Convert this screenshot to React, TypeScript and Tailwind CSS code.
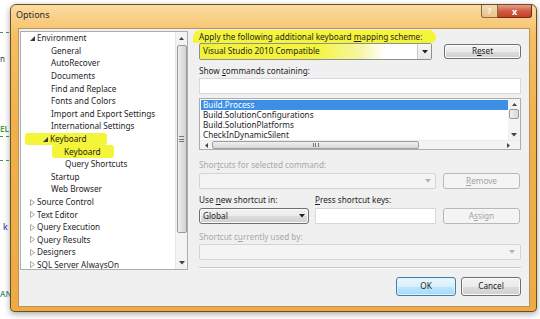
import type { ReactNode } from "react";

const treeRows: { label: string; level: number; arrow?: "open" | "closed"; mark?: "wide" | "narrow" }[] = [
  { label: "Environment", level: 0, arrow: "open" },
  { label: "General", level: 1 },
  { label: "AutoRecover", level: 1 },
  { label: "Documents", level: 1 },
  { label: "Find and Replace", level: 1 },
  { label: "Fonts and Colors", level: 1 },
  { label: "Import and Export Settings", level: 1 },
  { label: "International Settings", level: 1 },
  { label: "Keyboard", level: 1, arrow: "open", mark: "wide" },
  { label: "Keyboard", level: 2, mark: "narrow" },
  { label: "Query Shortcuts", level: 2 },
  { label: "Startup", level: 1 },
  { label: "Web Browser", level: 1 },
  { label: "Source Control", level: 0, arrow: "closed" },
  { label: "Text Editor", level: 0, arrow: "closed" },
  { label: "Query Execution", level: 0, arrow: "closed" },
  { label: "Query Results", level: 0, arrow: "closed" },
  { label: "Designers", level: 0, arrow: "closed" },
  { label: "SQL Server AlwaysOn", level: 0, arrow: "closed" },
];

const commands = [
  "Build.Process",
  "Build.SolutionConfigurations",
  "Build.SolutionPlatforms",
  "CheckInDynamicSilent",
];

function Arrow({ kind }: { kind?: "open" | "closed" }) {
  if (!kind) return <span className="w-[7px] shrink-0" />;
  return (
    <span className="flex w-[7px] shrink-0 items-center">
      {kind === "open" ? (
        <svg width="5" height="5" viewBox="0 0 5 5">
          <path d="M5 0 L5 5 L0 5 Z" fill="#3b3b3b" />
        </svg>
      ) : (
        <svg width="5" height="7" viewBox="0 0 5 7">
          <path d="M0.5 0.5 L4.5 3.5 L0.5 6.5 Z" fill="none" stroke="#a6a6a6" strokeWidth="1" />
        </svg>
      )}
    </span>
  );
}

function DownArrow({ color = "#222" }: { color?: string }) {
  return (
    <svg width="6" height="4" viewBox="0 0 6 4">
      <path d="M0 0 L6 0 L3 3.5 Z" fill={color} />
    </svg>
  );
}

function WinButton({
  children,
  disabled,
  focused,
  className = "",
}: {
  children: ReactNode;
  disabled?: boolean;
  focused?: boolean;
  className?: string;
}) {
  const look = disabled
    ? "border-[#b5b9bc] bg-[#f4f4f4] text-[#a3a3a3]"
    : focused
      ? "border-[#3c7fb1] bg-[linear-gradient(#eaf6fd,#d9f0fc_50%,#bee6fd_51%,#a7d9f5)] text-[#1b1b1b] shadow-[inset_0_0_0_1px_#dff2fc]"
      : "border-[#707070] bg-[linear-gradient(#f2f2f2,#ebebeb_50%,#dddddd_51%,#cfcfcf)] text-[#1b1b1b] shadow-[inset_0_0_0_1px_#fbfbfb]";
  return (
    <div className={`flex items-center justify-center rounded-[3px] border ${look} ${className}`}>
      {children}
    </div>
  );
}

function Label({ children, disabled }: { children: ReactNode; disabled?: boolean }) {
  return (
    <div className={`flex h-[12px] items-center leading-none ${disabled ? "text-[#a8a8a8]" : "text-[#1e1e1e]"}`}>
      {children}
    </div>
  );
}

export default function App() {
  return (
    <div className="flex h-[319px] w-[540px] overflow-hidden bg-white font-['Noto_Sans',sans-serif] text-[8.2px]">
      {/* bits of the page behind the dialog */}
      <div className="flex w-[10px] shrink-0 flex-col text-[8px] leading-none">
        <div className="mt-[32px] h-[1px] w-[9px] border-t border-dashed border-[#3e9a3e]" />
        <div className="mt-[22px] text-[#333]">n</div>
        <div className="mt-[62px] font-semibold text-[#3e9a3e]">EL</div>
        <div className="mt-[3px] h-[1px] w-[9px] border-t border-dashed border-[#3e9a3e]" />
        <div className="mt-[23px] h-[1px] w-[9px] border-t border-dashed border-[#3e9a3e]" />
        <div className="mt-[62px] ml-[3px] font-semibold text-[#5a4fb0]">k</div>
        <div className="mt-[59px] font-semibold text-[#3f8f86]">AN</div>
      </div>

      {/* dialog window */}
      <div className="mt-[4px] flex h-[308px] w-[527px] shrink-0 flex-col rounded-t-[6px] rounded-b-[4px] border border-[#6b4e1e] bg-[linear-gradient(#fbdca2,#f6bf62_10%,#f2b04a_40%,#eeab44)] shadow-[0_2px_6px_rgba(0,0,0,0.35)]">
        {/* title bar */}
        <div className="flex h-[23px] shrink-0 items-start">
          <div className="mt-[5px] ml-[5px] text-[9px] leading-none text-[#2a2a2a]">Options</div>
          <div className="ml-auto mr-[4px] flex">
            <div className="flex h-[13px] w-[17px] items-center justify-center rounded-bl-[3px] border border-t-0 border-[#8a6a3a] bg-[linear-gradient(#f5dcb4,#e9c18a)] text-[8px] font-bold leading-none text-[#fdf7ec]">
              ?
            </div>
            <div className="flex h-[13px] w-[34px] items-center justify-center rounded-br-[3px] border border-l-0 border-t-0 border-[#7a2a1a] bg-[linear-gradient(#e9a08c,#cf5a43_50%,#c4412a)] text-[9px] font-bold leading-none text-white">
              x
            </div>
          </div>
        </div>

        {/* client area */}
        <div className="mx-[7px] flex h-[279px] w-[512px] border border-[#b8935a] bg-[#f0f0f0]">
          {/* tree */}
          <div className="ml-[1px] mt-[2px] flex h-[239px] w-[168px] shrink-0 border border-[#abadb3] bg-white">
            <div className="flex min-w-0 flex-1 flex-col overflow-hidden">
              {treeRows.map((row, i) => (
                <div key={i} className="flex h-[12.6px] shrink-0 items-center">
                  <div
                    className={`flex h-full items-center ${
                      row.mark === "wide"
                        ? "ml-[4px] rounded-[3px] bg-[#f4f43a] pl-[18px] pr-[20px]"
                        : row.mark === "narrow"
                          ? "ml-[31px] rounded-[3px] bg-[#f4f43a] pl-[5px] pr-[13px]"
                          : ""
                    }`}
                    style={row.mark ? undefined : { paddingLeft: 9 + row.level * 14 }}
                  >
                    <Arrow kind={row.arrow} />
                    <span className="whitespace-nowrap leading-none text-[#1e1e1e]">{row.label}</span>
                  </div>
                </div>
              ))}
            </div>
            {/* vertical scrollbar */}
            <div className="flex w-[12px] shrink-0 flex-col items-center border-l border-[#e6e6e6] bg-[#f3f3f3]">
              <div className="flex h-[13px] items-center justify-center">
                <svg width="5" height="3" viewBox="0 0 5 3">
                  <path d="M0 3 L5 3 L2.5 0 Z" fill="#444" />
                </svg>
              </div>
              <div className="flex h-[188px] w-[10px] items-center justify-center rounded-[2px] border border-[#9a9a9a] bg-[linear-gradient(90deg,#f0f0f0,#e0e0e0_50%,#d2d2d2)]">
                <div className="flex h-[6px] w-[5px] flex-col justify-between">
                  <div className="h-[1px] bg-[#777]" />
                  <div className="h-[1px] bg-[#777]" />
                  <div className="h-[1px] bg-[#777]" />
                </div>
              </div>
              <div className="mt-auto flex h-[12px] items-center justify-center">
                <DownArrow color="#444" />
              </div>
            </div>
          </div>

          {/* right side */}
          <div className="ml-[11px] flex w-[322px] shrink-0 flex-col">
            <div className="mt-[1px] -ml-[6px] w-[243px] rounded-t-[14px] rounded-br-[10px] bg-[#f4f43a] pl-[6px] pt-[1px]">
              <Label>
                <span>
                  Apply the following additional keyboard <u>m</u>apping scheme:
                </span>
              </Label>
            </div>
            <div className="flex h-[17px] items-stretch gap-[12px]">
              <div className="flex w-[233px] items-stretch rounded-[2px] border border-[#8e8f8f] bg-[linear-gradient(90deg,#f2f23c,#f4f43e_50%,#f6f6a8_70%,#ffffff_80%)]">
                <div className="flex flex-1 items-center pl-[3px] leading-none text-[#1e1e1e]">
                  Visual Studio 2010 Compatible
                </div>
                <div className="flex w-[14px] items-center justify-center border-l border-[#c9c9c9] bg-[linear-gradient(#f7f7f7,#e8e8e8)]">
                  <DownArrow />
                </div>
              </div>
              <WinButton className="my-[1px] w-[77px]">
                <span>
                  R<u>e</u>set
                </span>
              </WinButton>
            </div>

            <div className="mt-[5px]">
              <Label>
                <span>
                  Show <u>c</u>ommands containing:
                </span>
              </Label>
            </div>
            <div className="mt-[1px] h-[16px] border border-[#d5d8de] bg-white" />

            {/* command list */}
            <div className="mt-[4px] flex h-[52px] flex-col border border-[#abadb3] bg-white">
              <div className="flex h-[41px] min-h-0">
                <div className="flex flex-1 flex-col pl-[1px] pt-[1px]">
                  {commands.map((c, i) => (
                    <div
                      key={c}
                      className={`flex h-[10.3px] items-center pl-[2px] leading-none ${
                        i === 0 ? "bg-[#3d8ee6] text-white" : "text-[#1e1e1e]"
                      }`}
                    >
                      {c}
                    </div>
                  ))}
                </div>
                <div className="flex w-[12px] flex-col items-center bg-[#f3f3f3]">
                  <div className="flex h-[10px] items-center justify-center">
                    <svg width="5" height="3" viewBox="0 0 5 3">
                      <path d="M0 3 L5 3 L2.5 0 Z" fill="#444" />
                    </svg>
                  </div>
                  <div className="h-[10px] w-[10px] rounded-[2px] border border-[#9a9a9a] bg-[linear-gradient(90deg,#f0f0f0,#d8d8d8)]" />
                  <div className="mt-auto flex h-[10px] items-center justify-center">
                    <DownArrow color="#444" />
                  </div>
                </div>
              </div>
              <div className="flex h-[9px] items-center border-t border-[#ececec] bg-[#f3f3f3]">
                <div className="flex w-[12px] items-center justify-center">
                  <svg width="3" height="5" viewBox="0 0 3 5">
                    <path d="M3 0 L3 5 L0 2.5 Z" fill="#444" />
                  </svg>
                </div>
                <div className="flex h-[8px] w-[207px] items-center justify-center rounded-[2px] border border-[#a0a0a0] bg-[linear-gradient(#f0f0f0,#d6d6d6)]">
                  <div className="flex h-[4px] w-[6px] justify-between">
                    <div className="w-[1px] bg-[#777]" />
                    <div className="w-[1px] bg-[#777]" />
                    <div className="w-[1px] bg-[#777]" />
                  </div>
                </div>
                <div className="ml-auto flex w-[24px] items-center justify-center">
                  <svg width="3" height="5" viewBox="0 0 3 5">
                    <path d="M0 0 L3 2.5 L0 5 Z" fill="#444" />
                  </svg>
                </div>
              </div>
            </div>

            <div className="mt-[9px]">
              <Label disabled>
                <span>
                  Shor<u>t</u>cuts for selected command:
                </span>
              </Label>
            </div>
            <div className="mt-[2px] flex h-[16px] gap-[7px]">
              <div className="flex w-[237px] items-center justify-end rounded-[2px] border border-[#d4d4d4] bg-[#f4f4f4] pr-[4px]">
                <DownArrow color="#b0b0b0" />
              </div>
              <WinButton disabled className="w-[77px]">
                <span>
                  <u>R</u>emove
                </span>
              </WinButton>
            </div>

            <div className="mt-[5px] flex">
              <div className="w-[116px]">
                <Label>
                  <span>
                    Use <u>n</u>ew shortcut in:
                  </span>
                </Label>
              </div>
              <Label>
                <span>
                  <u>P</u>ress shortcut keys:
                </span>
              </Label>
            </div>
            <div className="mt-[2px] flex h-[16px]">
              <WinButton className="w-[110px] !justify-between px-[3px]">
                <span className="leading-none">Global</span>
                <DownArrow />
              </WinButton>
              <div className="ml-[6px] w-[121px] border border-[#d5d8de] bg-white" />
              <WinButton disabled className="ml-[7px] w-[77px]">
                <span>
                  A<u>s</u>sign
                </span>
              </WinButton>
            </div>

            <div className="mt-[7px]">
              <Label disabled>
                <span>
                  Shortcut c<u>u</u>rrently used by:
                </span>
              </Label>
            </div>
            <div className="mt-[1px] flex h-[16px] items-center justify-end rounded-[2px] border border-[#d4d4d4] bg-[#f4f4f4] pr-[5px]">
              <DownArrow color="#b0b0b0" />
            </div>

            <div className="mt-[7px] h-[1px] border-t border-[#c8c8c8] shadow-[0_1px_0_#fff]" />

            <div className="mt-[9px] flex h-[19px] justify-end gap-[5px]">
              <WinButton focused className="w-[60px]">
                OK
              </WinButton>
              <WinButton className="w-[60px]">Cancel</WinButton>
            </div>
          </div>
        </div>
      </div>
    </div>
  );
}
